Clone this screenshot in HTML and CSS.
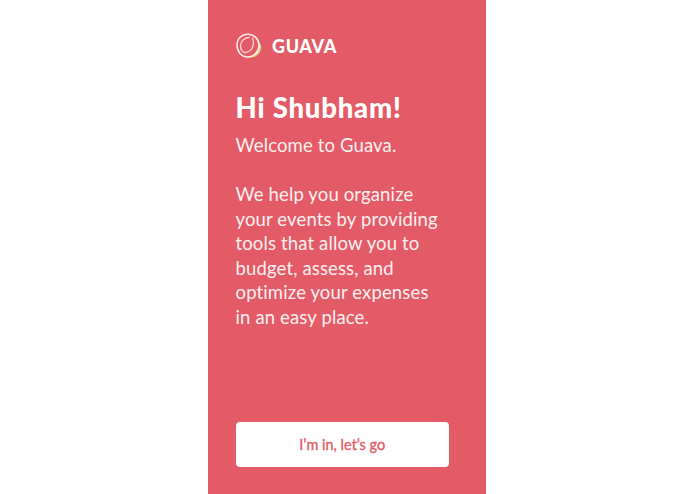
FILE: index.html
```html
<!DOCTYPE html>
<html lang="en">
<head>
<meta charset="utf-8">
<title>Guava</title>
<link rel="stylesheet" href="styles.css">
</head>
<body>
<main class="screen">
  <header class="brand">
    <svg class="logo" width="26" height="26" viewBox="0 0 26 26" fill="none">
      <path d="M13 24.500c6 .5 11-3 12-8.500.5-2.800-.3-5-2.300-7 .8 6.500-3.200 13-9.700 15.500z" fill="#d5dc82"/>
      <path d="M12.500 1.200C6 .6 1 5.500 1 12c0 6.500 4.500 12 10.500 12 6.200 0 11.500-5.500 11.500-12 0-5.800-4.500-10.300-10.500-10.800z" stroke="#fdeee8" stroke-width="1.500"/>
      <path d="M13 4.500c-4.500 0-8.500 4-8.500 8.500 0 3.500 2 6.500 5 6.500 4.500 0 8-4.500 8-9.500 0-1.800-.3-3.500-1-5" stroke="#f9d5d0" stroke-width="1.300" stroke-linecap="round"/>
    </svg>
    <span class="brand-name">GUAVA</span>
  </header>
  <h1 class="title">Hi Shubham!</h1>
  <p class="copy">Welcome to Guava.</p>
  <p class="copy copy-main">We help you organize<br>your events by providing<br>tools that allow you to<br>budget, assess, and<br>optimize your expenses<br>in an easy place.</p>
  <button class="cta" type="button">I’m in, let’s go</button>
</main>
</body>
</html>
```
FILE: styles.css
```css
html, body {
  margin: 0;
  height: 100%;
  background: #fff;
}
.screen {
  box-sizing: border-box;
  width: 278px;
  height: 494px;
  margin-left: 208px;
  padding: 33px 37px 27px 27.500px;
  background: #e45b68;
  color: #fff;
  font-family: Lato, "Liberation Sans", sans-serif;
  display: flex;
  flex-direction: column;
}
.brand {
  display: flex;
  align-items: center;
  gap: 10.500px;
  height: 26px;
}
.logo {
  flex: none;
}
.brand-name {
  font-size: 18px;
  font-weight: 900;
  letter-spacing: 0.6px;
}
.title {
  margin: 32px 0 0;
  font-size: 27.500px;
  line-height: 34px;
  font-weight: 900;
  letter-spacing: 0.8px;
}
.copy {
  margin: 8px 0 0;
  font-size: 18.500px;
  line-height: 24.500px;
  font-weight: 400;
  letter-spacing: 0.14px;
  color: #fdf0f0;
}
.copy-main {
  margin-top: 24.500px;
}
.cta {
  margin-top: auto;
  height: 45px;
  width: 100%;
  border: 0;
  border-radius: 4px;
  background: #fff;
  color: #e45b68;
  font-family: inherit;
  font-size: 14.500px;
  font-weight: 400;
  -webkit-text-stroke: 0.35px #e45b68;
}
```
